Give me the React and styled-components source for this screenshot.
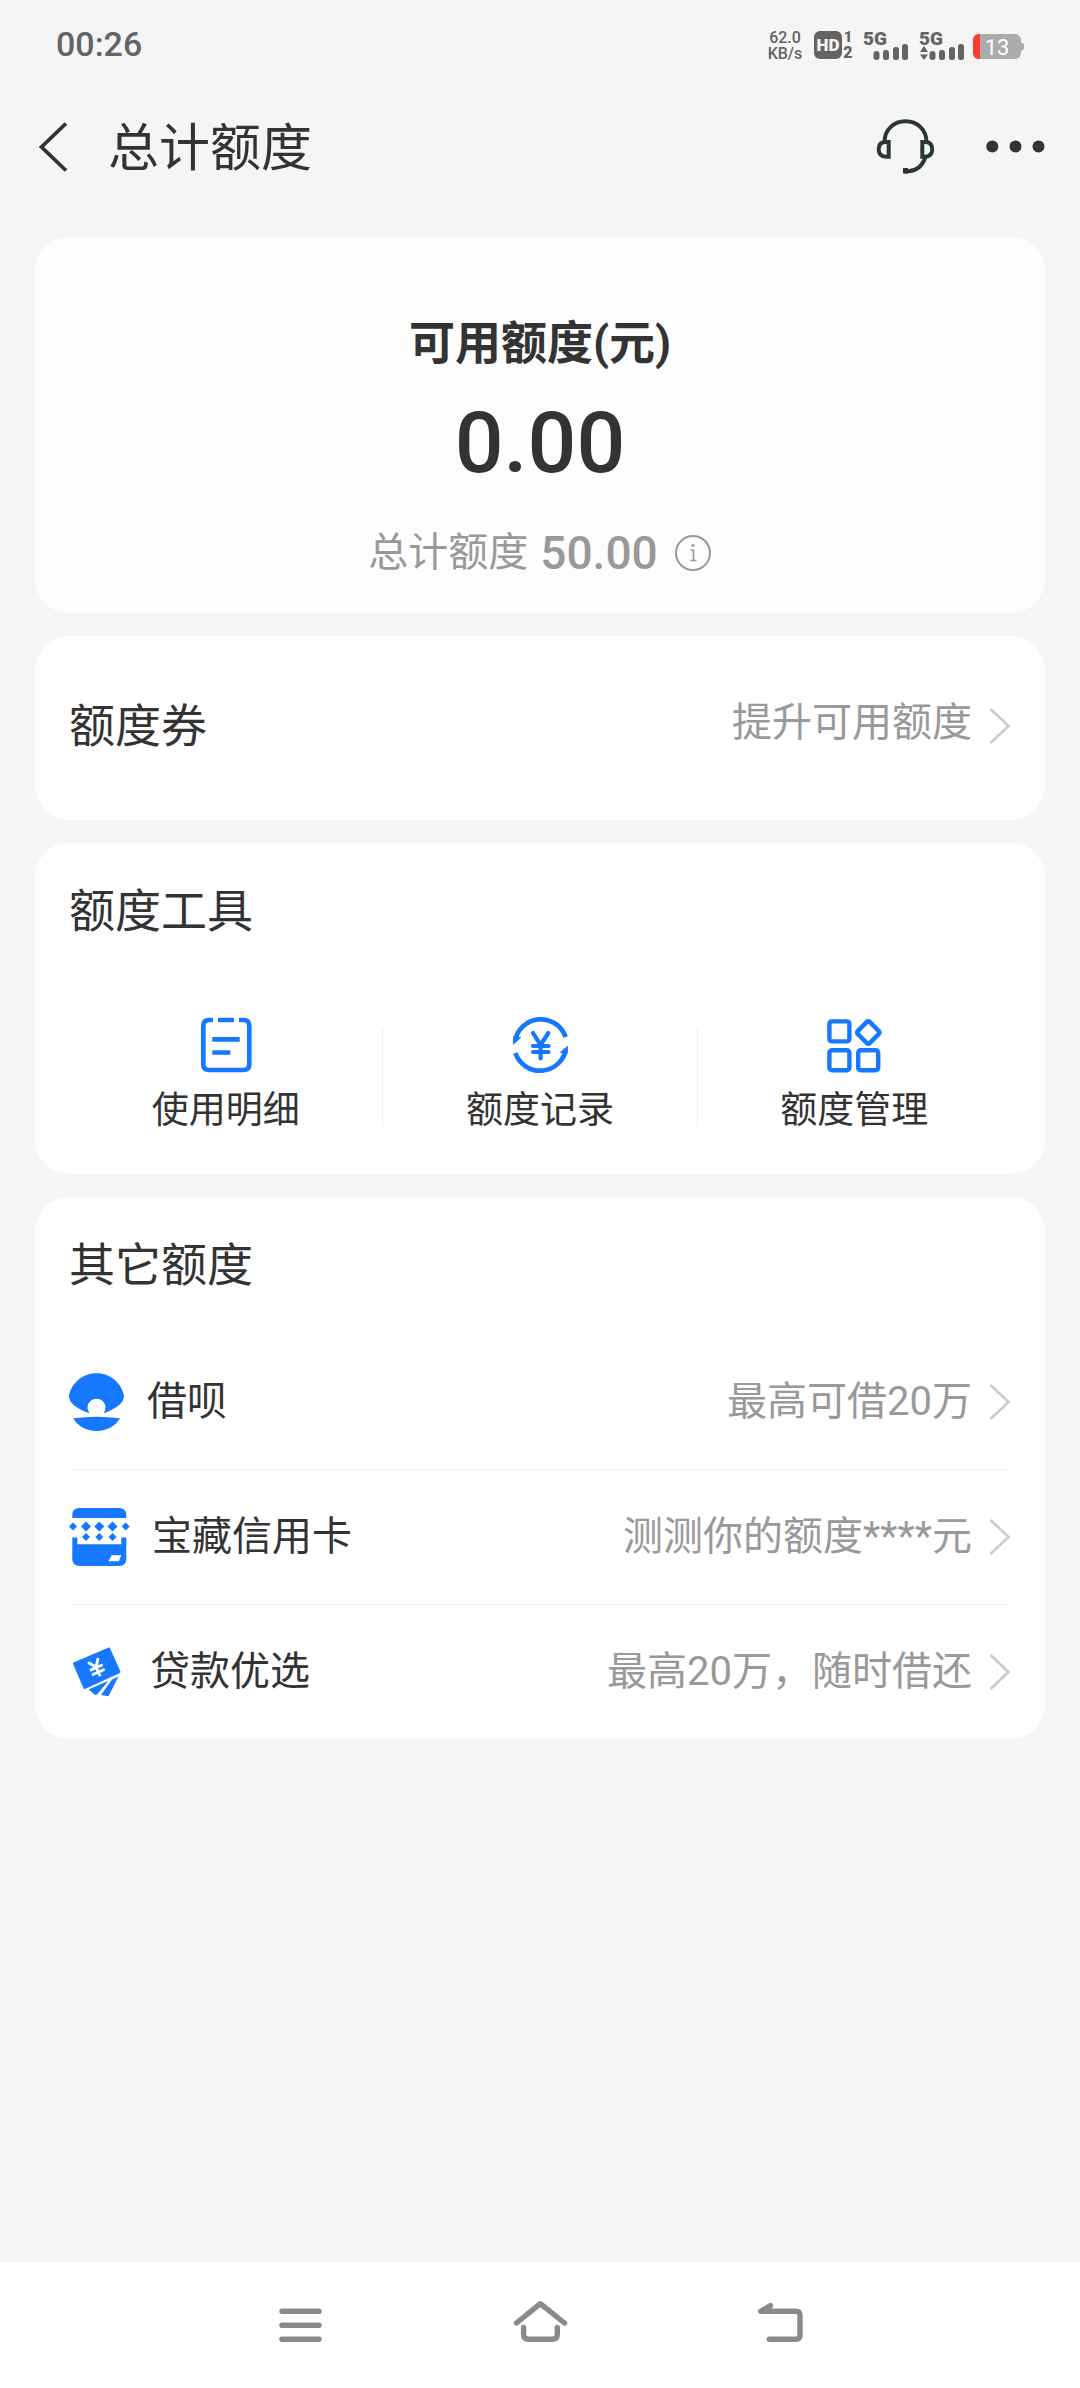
import React from "react";
import styled, { createGlobalStyle } from "styled-components";

const GlobalStyle = createGlobalStyle`
  *, *::before, *::after { box-sizing: border-box; }
  body {
    margin: 0;
    background: #f5f5f5;
    color: #333;
    font-family: Roboto, "Noto Sans CJK SC", sans-serif;
  }
  h1, h2, p, ul { margin: 0; padding: 0; font-weight: 400; }
  ul { list-style: none; }
  svg { display: block; flex: none; }
`;

const Page = styled.div`
  display: flex;
  flex-direction: column;
  min-height: 100vh;
`;

const StatusBar = styled.div`
  display: flex;
  align-items: center;
  justify-content: space-between;
  height: 92px;
  padding: 0 56px;
  color: #646464;
`;

const Clock = styled.time`
  font-size: 34px;
  font-weight: 500;
  line-height: 40px;
  padding-bottom: 4px;
`;

const StatusIcons = styled.div`
  display: flex;
  align-items: center;
  gap: 9px;
`;

const Speed = styled.div`
  width: 40px;
  display: flex;
  flex-direction: column;
  font-size: 16px;
  font-weight: 500;
  line-height: 16px;
  text-align: center;
`;

const Header = styled.header`
  display: flex;
  align-items: center;
  height: 110px;
  padding: 0 35px;
`;

const IconButton = styled.button`
  display: flex;
  padding: 0;
  border: 0;
  background: none;
  color: #333;
  cursor: pointer;
`;

const Title = styled.h1`
  flex: 1;
  margin-left: 37px;
  padding-top: 4px;
  font-size: 51px;
  line-height: 64px;
`;

const HeaderActions = styled.div`
  display: flex;
  gap: 50px;
`;

const Main = styled.main`
  flex: 1;
  display: flex;
  flex-direction: column;
  gap: 23px;
  padding: 35px;
`;

const Card = styled.section`
  padding: 40px 34px 0;
  border-radius: 34px;
  background: #fff;
`;

const SummaryCard = styled(Card)`
  display: flex;
  flex-direction: column;
  align-items: center;
  padding: 74px 34px 32px;
  background: #fdfdfd;
`;

const SummaryLabel = styled.h2`
  font-size: 46px;
  font-weight: 700;
  line-height: 64px;
`;

const Amount = styled.p`
  margin-top: 18px;
  font-size: 86px;
  font-weight: 500;
  line-height: 100px;
`;

const TotalRow = styled.div`
  display: flex;
  align-items: center;
  margin-top: 32px;
  font-size: 40px;
  line-height: 56px;
  color: #999;
`;

const TotalValue = styled.strong`
  margin: 0 16px 0 12px;
  font-size: 46px;
  font-weight: 500;
`;

const CouponCard = styled(Card)`
  display: flex;
  align-items: center;
  justify-content: space-between;
  padding: 62px 34px 66px;
`;

const SectionTitle = styled.h2`
  font-size: 46px;
  line-height: 56px;
`;

const MoreLink = styled.a`
  display: flex;
  align-items: flex-start;
  gap: 17px;
  font-size: 40px;
  line-height: 38px;
  color: #999;
  text-decoration: none;
`;

const Tools = styled.div`
  display: flex;
  margin-top: 76px;
  padding-bottom: 39px;
`;

const Tool = styled.button`
  flex: 1 1 0;
  display: flex;
  flex-direction: column;
  align-items: center;
  gap: 12px;
  padding: 0;
  border: 0;
  background: none;
  color: #333;
  font-family: inherit;
  font-size: 37px;
  line-height: 48px;
  cursor: pointer;
`;

const Divider = styled.span`
  align-self: flex-end;
  width: 1px;
  height: 98px;
  margin-bottom: 8px;
  background: #eee;
`;

const QuotaList = styled.ul`
  margin-top: 42px;
`;

const QuotaItem = styled.li`
  & + & { border-top: 1px solid #f2f2f2; }
`;

const QuotaRow = styled.a`
  display: flex;
  align-items: center;
  height: 134px;
  font-size: 40px;
  line-height: 48px;
  color: #333;
  text-decoration: none;
`;

const QuotaName = styled.span`
  flex: 1;
  margin-left: 22px;
`;

const QuotaHint = styled.span`
  margin-right: 17px;
  color: #999;
`;

const NavBar = styled.nav`
  display: flex;
  justify-content: center;
  gap: 180px;
  padding: 33px 0;
  background: #fff;
`;

const NavButton = styled(IconButton)`
  color: #8a8a8a;
`;

const BLUE = "#1677ff";

function HdIcon() {
  return (
    <svg width="40" height="44" viewBox="0 -6 40 44" fill="#646464" fontFamily="Roboto, sans-serif" fontWeight="900">
      <rect x="0" y="1" width="28" height="28" rx="6" />
      <text x="14" y="21" fontSize="17" textAnchor="middle" fill="#f5f5f5">HD</text>
      <text x="34" y="12" fontSize="15" textAnchor="middle">1</text>
      <text x="34" y="28" fontSize="16" textAnchor="middle">2</text>
    </svg>
  );
}

function SignalIcon({ transfer, start }) {
  return (
    <svg width="46" height="44" viewBox="0 -6 46 44" fill="#646464">
      <g transform={`translate(${start} 0)`}>
        <text x="-1" y="15" fontSize="19" fontFamily="Roboto, sans-serif" fontWeight="900">5G</text>
        {transfer && <path d="M0 22 L4 16 L8 22 Z M0 24.5 H8 L4 30 Z" />}
        <rect x="9.5" y="21" width="6" height="9" rx="3" />
        <rect x="19" y="20" width="6" height="10" rx="2.5" />
        <rect x="29" y="17" width="6" height="13" rx="2.5" />
        <rect x="38" y="14" width="6" height="16" rx="2.5" />
      </g>
    </svg>
  );
}

function BatteryIcon() {
  return (
    <svg width="51" height="32" viewBox="0 0 51 32">
      <rect x="0" y="4" width="48" height="25" rx="6" fill="#ababab" />
      <path d="M47 12 L51 14 V19 L47 22 Z" fill="#ababab" />
      <path d="M7 4 V29 H6 A6 6 0 0 1 0 23 V10 A6 6 0 0 1 6 4 Z" fill="#ff3b30" />
      <text x="24" y="25" fontSize="22" textAnchor="middle" fill="#fff" fontFamily="Roboto, sans-serif">13</text>
    </svg>
  );
}

function BackIcon() {
  return (
    <svg width="36" height="52" viewBox="0 0 36 52" fill="none" stroke="currentColor" strokeWidth="3.8">
      <path d="M31 2.5 L6.5 26 L31 49.5" />
    </svg>
  );
}

function HeadsetIcon() {
  return (
    <svg width="60" height="60" viewBox="0 0 60 60" fill="none" stroke="#2b3638" strokeWidth="4">
      <path d="M9.5 25 C9.5 13 18.5 4.3 30.5 4.3 C42.5 4.3 51.5 13 51.5 25" />
      <path d="M13.7 25 V39.7 H11 C6 39.7 3.7 37 3.7 32.3 C3.7 27.5 6 25 11 25 Z" />
      <path d="M47.3 25 V39.7 H50 C55 39.7 57.2 37 57.2 32.3 C57.2 27.5 55 25 50 25 Z" />
      <path d="M50.5 40 C47 50 41 54.5 29 54.5" />
      <path d="M28 51 H33 V56.5 H28 Z" fill="#2b3638" stroke="none" />
    </svg>
  );
}

function MoreIcon() {
  return (
    <svg width="60" height="60" viewBox="0 0 60 60" fill="currentColor">
      <circle cx="7.3" cy="29.5" r="6" />
      <circle cx="30.5" cy="29.5" r="6" />
      <circle cx="53.5" cy="29.5" r="6" />
    </svg>
  );
}

function InfoIcon() {
  return (
    <svg width="38" height="38" viewBox="0 0 38 38" fill="none" stroke="#999" strokeWidth="2">
      <circle cx="19" cy="19" r="17" />
      <path d="M16.5 16 H19.5 V26.5 M16.5 26.5 H22.5" strokeWidth="1.6" />
      <circle cx="19" cy="11.5" r="1.6" fill="#999" stroke="none" />
    </svg>
  );
}

function ChevronIcon() {
  return (
    <svg width="22" height="44" viewBox="0 0 22 44" fill="none" stroke="#ccc" strokeWidth="2.6">
      <path d="M1.5 5 L19.5 22 L1.5 39" />
    </svg>
  );
}

function DetailIcon() {
  return (
    <svg width="60" height="60" viewBox="0 0 60 60" fill="none" stroke={BLUE} strokeWidth="4.7">
      <path d="M17 5 H13 Q7.3 5 7.3 11 V49.5 Q7.3 55 13 55 H47.5 Q53.3 55 53.3 49.5 V11 Q53.3 5 47.5 5 H43" />
      <path d="M22 5 H38 M16.3 24.3 H43.7 M16.3 37.5 H34.3" />
    </svg>
  );
}

function RecordIcon() {
  return (
    <svg width="60" height="60" viewBox="0 0 60 60" fill="none" stroke={BLUE} strokeWidth="4.7">
      <path d="M5 26 A26.2 26.2 0 0 1 55.6 22" />
      <path d="M56 34 A26.2 26.2 0 0 1 5.4 38" />
      <path d="M3 30 L3.4 21 L11.5 22.2 Z M58 30.5 L57.6 38.8 L49.5 37.8 Z" fill={BLUE} stroke="none" />
      <path d="M23 18 L30.6 30 L38.3 18 M30.6 30 V43.5 M23 31 H38.5 M23 37 H38.5" strokeLinecap="round" strokeWidth="4.2" />
    </svg>
  );
}

function ManageIcon() {
  return (
    <svg width="60" height="60" viewBox="0 0 60 60" fill="none" stroke={BLUE} strokeWidth="4.4">
      <rect x="5.4" y="6.4" width="20" height="20" rx="2.5" />
      <rect x="5.4" y="35.2" width="20" height="20" rx="2.5" />
      <rect x="34.2" y="35.2" width="20" height="20" rx="2.5" />
      <rect x="35.8" y="9" width="17" height="17" rx="2" transform="rotate(45 44.3 17.5)" />
    </svg>
  );
}

function ShellIcon() {
  return (
    <svg width="56" height="60" viewBox="0 0 56 60" fill={BLUE}>
      <path d="M20.5 41.3 C12 38.5 0 32.5 0 24 C2 12 13 1.3 27.5 1.3 C42 1.3 53 12 55 24 C55 32.5 43 38.5 34.5 41.3 A9 9 0 1 0 20.5 41.3 Z" />
      <path d="M4.3 46.3 Q27.5 43 51 46.3 C46 54.5 38 59 27.5 59 C17 59 9 54.5 4.3 46.3 Z" />
    </svg>
  );
}

function CreditCardIcon() {
  const diamonds = [
    [4, 18.5, 4], [17, 18.5, 5], [30.3, 18.5, 5], [43.5, 18.5, 5], [56.7, 18.5, 4],
    [17, 29, 4], [30.3, 29, 4], [43.5, 29, 4],
  ];
  return (
    <svg width="61" height="58" viewBox="0 0 61 58" fill={BLUE}>
      <path d="M3.3 10 V7 Q3.3 0 10.5 0 H50 Q57.3 0 57.3 7 V10 Z" />
      <path d="M3.3 29.5 H8.3 V36.3 H52.3 V29.5 H57.3 V51 Q57.3 58 50 58 H10.5 Q3.3 58 3.3 51 Z" />
      {diamonds.map(([x, y, r]) => (
        <path key={`${x}-${y}`} d={`M${x} ${y - r} L${x + r} ${y} L${x} ${y + r} L${x - r} ${y} Z`} />
      ))}
      <path d="M42.5 47.3 H52.3 L49.8 53.3 H39.5 Z" fill="#fff" />
    </svg>
  );
}

function LoanIcon() {
  return (
    <svg width="59" height="60" viewBox="0 0 59 60" fill={BLUE}>
      <path d="M5 21.5 L40 6.5 L50.5 30 L15.5 46 Z" stroke={BLUE} strokeWidth="2" strokeLinejoin="round" />
      <path d="M20 47.5 L36.5 40.3 L28 52.8 L25.5 52.3 Z" />
      <path d="M20 47.5 L36.5 40.3 L39.5 39 L29.5 50.5 L26 53 Z" />
      <path d="M32 53 L43 37.5 L49.5 34.5 L39.5 54.3 Z" />
      <g transform="rotate(-24 27.5 26)" fill="none" stroke="#fff" strokeWidth="2.8">
        <path d="M22 17.5 L27.5 25 L33 17.5 M27.5 25 V35 M20.5 25.5 H34.5 M20.5 30.5 H34.5" />
      </g>
    </svg>
  );
}

const navIcons = [
  { label: "最近任务", path: "M12 16.3 H49 M12 30.3 H49 M12 44.3 H49" },
  { label: "主屏幕", path: "M6.5 28 L30.3 8.7 L54.5 28 M13.6 32.5 V39 Q13.6 44.3 18.5 44.3 H42.5 Q47.3 44.3 47.3 39 V32.5" },
  { label: "返回上一页", path: "M20.4 10.7 L10.8 16.3 H46 Q50 16.3 50 20.5 V40 Q50 44.3 46 44.3 H19.3" },
];

const tools = [
  { label: "使用明细", Icon: DetailIcon },
  { label: "额度记录", Icon: RecordIcon },
  { label: "额度管理", Icon: ManageIcon },
];

const quotas = [
  { name: "借呗", hint: "最高可借20万", Icon: ShellIcon },
  { name: "宝藏信用卡", hint: "测测你的额度****元", Icon: CreditCardIcon },
  { name: "贷款优选", hint: "最高20万，随时借还", Icon: LoanIcon },
];

export default function App() {
  return (
    <Page lang="zh-CN">
      <GlobalStyle />
      <StatusBar>
        <Clock>00:26</Clock>
        <StatusIcons>
          <Speed>
            <span>62.0</span>
            <span>KB/s</span>
          </Speed>
          <HdIcon />
          <SignalIcon start={1} />
          <SignalIcon start={2} transfer />
          <BatteryIcon />
        </StatusIcons>
      </StatusBar>

      <Header>
        <IconButton type="button" aria-label="返回"><BackIcon /></IconButton>
        <Title>总计额度</Title>
        <HeaderActions>
          <IconButton type="button" aria-label="客服"><HeadsetIcon /></IconButton>
          <IconButton type="button" aria-label="更多"><MoreIcon /></IconButton>
        </HeaderActions>
      </Header>

      <Main>
        <SummaryCard>
          <SummaryLabel>可用额度(元)</SummaryLabel>
          <Amount>0.00</Amount>
          <TotalRow>
            <span>总计额度</span>
            <TotalValue>50.00</TotalValue>
            <IconButton type="button" aria-label="额度说明"><InfoIcon /></IconButton>
          </TotalRow>
        </SummaryCard>

        <CouponCard>
          <SectionTitle>额度券</SectionTitle>
          <MoreLink href="#coupon">
            提升可用额度
            <ChevronIcon />
          </MoreLink>
        </CouponCard>

        <Card>
          <SectionTitle>额度工具</SectionTitle>
          <Tools>
            {tools.map(({ label, Icon }, index) => (
              <React.Fragment key={label}>
                {index > 0 && <Divider />}
                <Tool type="button">
                  <Icon />
                  {label}
                </Tool>
              </React.Fragment>
            ))}
          </Tools>
        </Card>

        <Card>
          <SectionTitle>其它额度</SectionTitle>
          <QuotaList>
            {quotas.map(({ name, hint, Icon }) => (
              <QuotaItem key={name}>
                <QuotaRow href="#quota">
                  <Icon />
                  <QuotaName>{name}</QuotaName>
                  <QuotaHint>{hint}</QuotaHint>
                  <ChevronIcon />
                </QuotaRow>
              </QuotaItem>
            ))}
          </QuotaList>
        </Card>
      </Main>

      <NavBar>
        {navIcons.map(({ label, path }) => (
          <NavButton key={label} type="button" aria-label={label}>
            <svg width="60" height="60" viewBox="0 0 60 60" fill="none" stroke="currentColor" strokeWidth="5.4" strokeLinecap="round" strokeLinejoin="round">
              <path d={path} />
            </svg>
          </NavButton>
        ))}
      </NavBar>
    </Page>
  );
}
